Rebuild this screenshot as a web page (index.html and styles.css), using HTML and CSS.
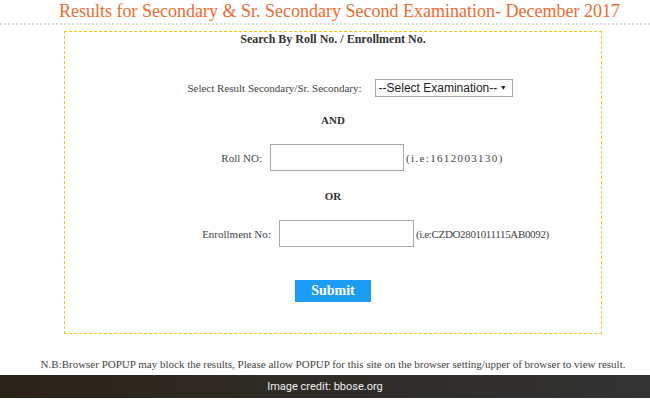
FILE: index.html
```html
<!DOCTYPE html>
<html>
<head>
<meta charset="utf-8">
<link rel="stylesheet" href="styles.css">
</head>
<body>
<h1 class="title">Results for Secondary &amp; Sr. Secondary Second Examination- December 2017</h1>
<div class="box">
  <div class="heading">Search By Roll No. / Enrollment No.</div>
  <div class="row row-select">
    <span class="label">Select Result Secondary/Sr. Secondary:</span>
    <span class="select">--Select Examination-- <span class="arrow">&#9660;</span></span>
  </div>
  <div class="sep sep-and">AND</div>
  <div class="row row-roll">
    <span class="label">Roll NO:</span>
    <span class="input input-roll"></span>
    <span class="hint hint-roll">(i.e:1612003130)</span>
  </div>
  <div class="sep sep-or">OR</div>
  <div class="row row-enroll">
    <span class="label">Enrollment No:</span>
    <span class="input input-enroll"></span>
    <span class="hint hint-enroll">(i.e:CZDO2801011115AB0092)</span>
  </div>
  <div class="actions"><span class="submit">Submit</span></div>
</div>
<p class="note">N.B:Browser POPUP may block the results, Please allow POPUP for this site on the browser setting/upper of browser to view result.</p>
<div class="credit">Image credit: bbose.org</div>
</body>
</html>
```
FILE: styles.css
```css
html, body {
  margin: 0;
  padding: 0;
  background: #fff;
  width: 650px;
  height: 400px;
  overflow: hidden;
}
body {
  font-family: "Liberation Serif", serif;
  color: #444;
  white-space: nowrap;
}
.title {
  margin: 0;
  font-family: "Liberation Serif", serif;
  font-weight: normal;
  font-size: 18px;
  line-height: 23px;
  color: #f26a2d;
  text-align: center;
  padding-left: 29px;
  border-bottom: 2px dotted #dedede;
}
.box {
  margin: 6px 48px 0 64px;
  border: 1px dashed #f5c518;
  padding: 0 0 31px 0;
}
.heading {
  text-align: center;
  font-weight: bold;
  font-size: 12px;
  line-height: 15px;
  color: #333;
}
.row {
  display: flex;
  justify-content: center;
  align-items: center;
  font-size: 11px;
  color: #444;
}
.row-select { margin-top: 32px; height: 18px; padding-left: 34px; }
.row-roll { margin-top: 17px; height: 27px; padding-left: 59px; }
.row-enroll { margin-top: 17px; height: 27px; padding-left: 85px; }
.row-select .label { margin-right: 13px; }
.row-roll .label, .row-enroll .label { margin-right: 8px; }
.select {
  box-sizing: border-box;
  width: 138px;
  height: 18px;
  border: 1px solid #a9a9a9;
  font-family: "Liberation Sans", Arial, sans-serif;
  font-size: 12px;
  line-height: 16px;
  color: #222;
  padding-left: 3px;
  display: flex;
  align-items: center;
  justify-content: space-between;
  padding-right: 5px;
}
.arrow { font-size: 7px; }
.input {
  box-sizing: border-box;
  height: 27px;
  border: 1px solid #a9a9a9;
  background: #fff;
  margin-right: 2px;
}
.input-roll { width: 134px; }
.input-enroll { width: 135px; }
.hint-roll { letter-spacing: 1.35px; }
.hint-enroll { letter-spacing: -0.35px; }
.sep {
  text-align: center;
  font-weight: bold;
  font-size: 11px;
  line-height: 14px;
  color: #333;
}
.sep-and { margin-top: 16px; }
.sep-or { margin-top: 18px; }
.actions {
  margin-top: 33px;
  display: flex;
  justify-content: center;
}
.submit {
  width: 76px;
  height: 22px;
  background: #1a9cf7;
  color: #fff;
  font-weight: bold;
  font-size: 14px;
  line-height: 22px;
  text-align: center;
}
.note {
  margin: 23px 0 0 0;
  font-size: 11px;
  line-height: 14px;
  text-align: center;
  padding-left: 16px;
  color: #444;
}
.credit {
  margin-top: 4px;
  height: 23px;
  line-height: 23px;
  background: linear-gradient(90deg, #2b2318 0%, #2e2a24 40%, #333 100%);
  color: #eee;
  text-align: center;
  font-family: Roboto, "Liberation Sans", sans-serif;
  font-size: 11px;
}
```
